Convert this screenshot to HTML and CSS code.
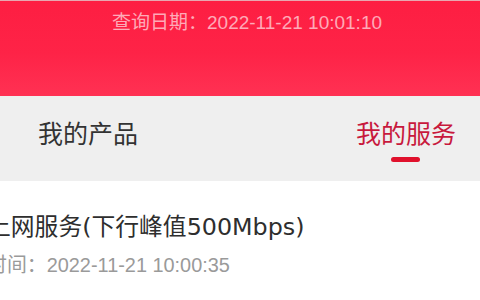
FILE: index.html
```html
<!DOCTYPE html>
<html lang="zh-CN">
<head>
<meta charset="utf-8">
<link rel="stylesheet" href="styles.css">
</head>
<body>
<div class="page">
  <header class="hero">
    <div class="query-date">查询日期：2022-11-21 10:01:10</div>
  </header>
  <nav class="tabs">
    <div class="tab">我的产品</div>
    <div class="tab active">我的服务<span class="bar"></span></div>
  </nav>
  <section class="item">
    <div class="item-title">上网服务(下行峰值500Mbps)</div>
    <div class="item-time">时间：2022-11-21 10:00:35</div>
  </section>
</div>
</body>
</html>
```
FILE: styles.css
```css
html, body {
  margin: 0;
  padding: 0;
  background: #ffffff;
}
.page {
  width: 480px;
  height: 300px;
  overflow: hidden;
  font-family: "Liberation Sans", "Noto Sans CJK SC", sans-serif;
}
.hero {
  height: 96px;
  border-top: 1px solid #e7a7b0;
  background: linear-gradient(180deg, #fd1e42 0%, #fe2347 55%, #ff3153 100%);
  box-sizing: border-box;
}
.query-date {
  padding: 9px 0 0 112px;
  font-size: 19px;
  line-height: 26px;
  color: rgba(255, 225, 230, 0.72);
}
.tabs {
  height: 85px;
  background: #efefef;
  display: flex;
  justify-content: space-between;
  padding: 0 24px 0 38px;
  box-sizing: border-box;
}
.tab {
  font-size: 25px;
  line-height: 36px;
  padding-top: 20px;
  color: #333333;
  display: flex;
  flex-direction: column;
  align-items: center;
}
.tab.active {
  color: #c8193d;
}
.bar {
  display: block;
  width: 29px;
  height: 5px;
  border-radius: 3px;
  background: #e0112c;
  margin-top: 5px;
}
.item {
  padding: 30px 0 0 0;
  margin-left: -13px;
}
.item-title {
  font-family: "DejaVu Sans", "Noto Sans CJK SC", sans-serif;
  font-size: 23.8px;
  line-height: 32px;
  color: #2e2e2e;
}
.item-time {
  margin-top: 10px;
  font-size: 19.9px;
  line-height: 24px;
  color: #9a9a9a;
}
```
